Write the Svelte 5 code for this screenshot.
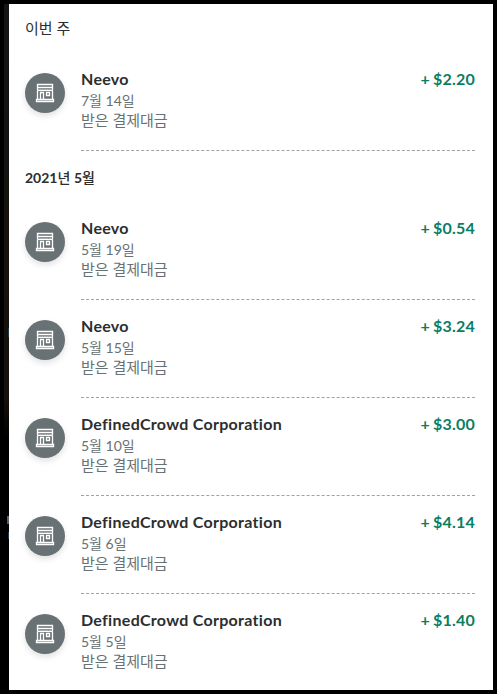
<script lang="ts">
  type Payment = { name: string; date: string; amount: string };
  type Group = { title: string; recent?: boolean; payments: Payment[] };

  const groups: Group[] = [
    {
      title: '이번 주',
      recent: true,
      payments: [{ name: 'Neevo', date: '7월 14일', amount: '2.20' }]
    },
    {
      title: '2021년 5월',
      payments: [
        { name: 'Neevo', date: '5월 19일', amount: '0.54' },
        { name: 'Neevo', date: '5월 15일', amount: '3.24' },
        { name: 'DefinedCrowd Corporation', date: '5월 10일', amount: '3.00' },
        { name: 'DefinedCrowd Corporation', date: '5월 6일', amount: '4.14' },
        { name: 'DefinedCrowd Corporation', date: '5월 5일', amount: '1.40' }
      ]
    }
  ];

  // digits are set bolder than the Hangul around them
  const titleParts = (title: string) => title.split(/(\d+)/).filter(Boolean);
</script>

<main class="backdrop">
  <div class="panel">
    {#each groups as group}
      <section>
        <h2 class:recent={group.recent}>
          {#each titleParts(group.title) as part}{#if /\d/.test(part)}<b>{part}</b>{:else}{part}{/if}{/each}
        </h2>
        <ul>
          {#each group.payments as payment}
            <li>
              <span class="avatar">
                <svg viewBox="0 0 20 20" aria-hidden="true">
                  <path d="M2.5 1.5h15v3h-15zM2.5 4.5v2q0 1 1.25 1t1.25-1q0 1 1.25 1t1.25-1q0 1 1.25 1t1.25-1q0 1 1.25 1t1.25-1q0 1 1.25 1t1.25-1q0 1 1.25 1t1.25-1v-2" />
                  <path d="M2.5 7.5v9M17.5 7.5v9M5.5 16.5v-7h3v7M11.5 9.5h3v3h-3zM1.5 16.5h17v2h-17z" />
                </svg>
              </span>
              <div class="body">
                <div class="details">
                  <span class="name">{payment.name}</span>
                  <span class="meta">{payment.date}</span>
                  <span class="meta kind">받은 결제대금</span>
                </div>
                <span class="amount">+ ${payment.amount}</span>
              </div>
            </li>
          {/each}
        </ul>
      </section>
    {/each}
  </div>
</main>

<style>
  :global(body) {
    margin: 0;
    background: #000;
  }

  .backdrop {
    box-sizing: border-box;
    height: 694px;
    padding: 4px 4px 4px 9px;
    overflow: hidden;
    background:
      linear-gradient(#1d3a4c, #1d3a4c) 8px 328px / 1px 9px no-repeat,
      linear-gradient(#4a6a8c, #6b5a48) 7px 516px / 2px 8px no-repeat,
      linear-gradient(#20384c, #20384c) 8px 532px / 1px 7px no-repeat,
      linear-gradient(#151515, #15110c 90%, #000) 4px 4px / 5px 436px no-repeat,
      #000;
    font-family: Lato, "Noto Sans CJK KR", sans-serif;
  }

  .panel {
    box-sizing: border-box;
    height: 686px;
    padding: 0 18px 0 16px;
    overflow: hidden;
    background: #fff;
  }

  h2 {
    box-sizing: border-box;
    height: 51px;
    margin: 0;
    padding-top: 17px;
    font-size: 14px;
    font-weight: 500;
    line-height: 20px;
    color: #2c2e2f;
  }

  h2.recent {
    height: 49px;
    padding-top: 14px;
    font-size: 15px;
    font-weight: 400;
  }

  ul {
    margin: 0;
    padding: 0;
    list-style: none;
  }

  li {
    display: flex;
    gap: 16px;
    height: 98px;
  }

  .avatar {
    display: grid;
    place-items: center;
    flex: none;
    width: 40px;
    height: 40px;
    margin-top: 20px;
    border-radius: 50%;
    background: #687173;
    box-shadow: 0 3px 6px rgba(0, 0, 0, 0.12);
  }

  svg {
    width: 20px;
    height: 20px;
    fill: none;
    stroke: #fff;
    stroke-width: 1.35;
  }

  .body {
    box-sizing: border-box;
    flex: 1;
    display: flex;
    justify-content: space-between;
    padding-top: 15px;
    border-bottom: 1px dashed #9da3a6;
  }

  section:last-child li:last-child .body {
    border-bottom: 0;
  }

  .details {
    display: flex;
    flex-direction: column;
  }

  .name,
  .amount {
    font-size: 16px;
    font-weight: 700;
    line-height: 21px;
    white-space: nowrap;
  }

  .name {
    margin-bottom: 2px;
    letter-spacing: 0.3px;
    color: #2c2e2f;
  }

  .meta {
    font-size: 14px;
    line-height: 20px;
    color: #687173;
  }

  .kind {
    font-size: 15px;
    line-height: 19px;
  }

  .amount {
    letter-spacing: 0.2px;
    word-spacing: -1px;
    color: #0b7d62;
  }
</style>
